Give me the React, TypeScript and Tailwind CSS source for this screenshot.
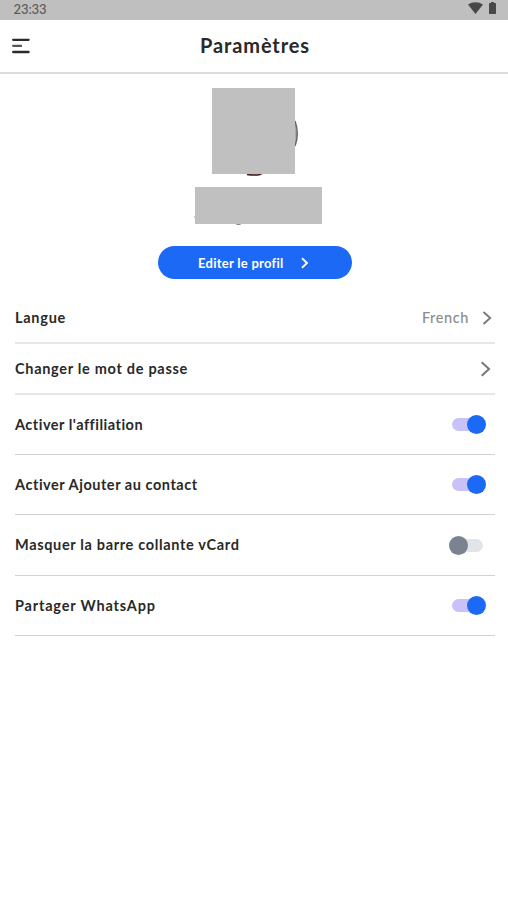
import React from "react";

function StatusBar() {
  return (
    <div className="flex h-[19.5px] items-start justify-between bg-[#bfbfbf] pr-[12px] pl-[13.5px]">
      <span className="text-[13px] leading-[18px] font-medium tracking-[-0.1px] text-[#5c5c5c]">23:33</span>
      <span className="flex items-start gap-[6px] pt-[2px]">
        <svg width="15" height="12" viewBox="0 0 15 12" fill="#484848">
          <path d="M0 2.6C4-.7 11-.7 15 2.6L7.5 12z" />
        </svg>
        <svg width="7" height="12" viewBox="0 0 7 12" fill="#484848">
          <path d="M2 0h3v1h1.3q.7 0 .7.7v9.6q0 .7-.7.7H.7q-.7 0-.7-.7V1.7q0-.7.7-.7H2z" />
        </svg>
      </span>
    </div>
  );
}

function Header() {
  return (
    <div className="flex h-[54.5px] items-center border-b-2 border-[#dcdcdc] pl-[12px]">
      <svg width="18" height="16" viewBox="0 0 18 16" fill="none" stroke="#2b2b2b" strokeWidth="2.3" strokeLinecap="round">
        <path d="M1.2 1.8H16.6M1.2 14H16.6" />
        <path d="M1.2 7.9H9" stroke="#555" />
      </svg>
      <h1 className="-mt-px flex-1 pr-[28px] text-center text-[20px] leading-[26px] font-bold tracking-[0.9px] text-[#292929]">Paramètres</h1>
    </div>
  );
}

function Profile() {
  return (
    <div className="flex flex-col items-center pt-[14px]">
      <div className="relative mr-[1px] h-[86px] w-[83px]">
        <svg className="absolute top-0 left-0" width="88" height="90" viewBox="0 0 88 90">
          <path d="M82 32Q88.500 46 82 60z" fill="#aaa" />
          <path d="M83 33Q87.500 46 83 58" fill="none" stroke="#666" strokeWidth="1.5" />
          <path d="M32 85Q43 89.500 55 85z" fill="#a3604f" />
          <path d="M35 86.500Q43 88 49 86.300" fill="none" stroke="#2b2020" strokeWidth="1.300" />
        </svg>
        <div className="relative h-full w-full bg-[#c0c0c0]" />
      </div>
      <div className="relative mt-[13px] ml-[9px] h-[36.5px] w-[127px]">
        <div className="absolute bottom-[-1px] left-[41px] h-[3px] w-[5px] rounded-full bg-[#888]" />
        <div className="absolute bottom-[6px] left-[-1px] h-[2px] w-[2px] bg-[#ccc]" />
        <div className="relative h-full w-full bg-[#c0c0c0]" />
      </div>
      <button className="mt-[22.5px] ml-[2px] flex h-[33px] w-[194px] items-center rounded-full bg-[#1c69f5] pl-[40px] text-white">
        <span className="w-[102px] text-left text-[13px] leading-[18px] font-bold tracking-[0.27px] whitespace-nowrap">Editer le profil</span>
        <svg width="9" height="12" viewBox="0 0 9 12" fill="none" stroke="white" strokeWidth="1.9">
          <path d="M2 1.2L7 6L2 10.8" />
        </svg>
      </button>
    </div>
  );
}

function Chevron({ large = false }: { large?: boolean }) {
  return (
    <svg width={large ? 11 : 10} height={large ? 16 : 14} viewBox="0 0 10 14" preserveAspectRatio="none" fill="none" stroke="#777" strokeWidth="1.8">
      <path d="M1.5 1L8.200 7L1.5 13" />
    </svg>
  );
}

function Toggle({ on }: { on: boolean }) {
  return (
    <span className="flex w-[38px] items-center">
      <span className={on ? "ml-[3px] flex h-[13px] w-[32px] items-center justify-end rounded-full bg-[#c9c2f8]" : "ml-[3px] flex h-[13px] w-[31px] items-center rounded-full bg-[#e1e4e8]"}>
        <span className={on ? "-mr-[2px] h-[19px] w-[19px] shrink-0 rounded-full bg-[#1c69f5]" : "-ml-[3px] h-[19px] w-[19px] shrink-0 rounded-full bg-[#7b8290]"} />
      </span>
    </span>
  );
}

const label = "text-[14.5px] leading-[20px] font-bold whitespace-nowrap text-[#292929] ";

export default function App() {
  return (
    <div className="h-[900px] w-[508px] overflow-hidden bg-white font-['Lato','Noto_Sans',sans-serif]">
      <StatusBar />
      <Header />
      <Profile />
      <div className="mt-[14px] flex flex-col pr-[13px] pl-[15px]">
        <div className="flex h-[51px] items-center justify-between border-b-2 border-[#e7e7e7] pr-[3px]">
          <span className={label + "tracking-[0.73px]"}>Langue</span>
          <span className="flex items-center gap-[13px] text-[14.5px] leading-[20px] font-medium tracking-[0.6px] text-[#8b8b8b]">
            French
            <Chevron />
          </span>
        </div>
        <div className="flex h-[51px] items-center justify-between border-b-2 border-[#e7e7e7] pr-[4px]">
          <span className={label + "tracking-[0.7px]"}>Changer le mot de passe</span>
          <Chevron large />
        </div>
        <div className="flex h-[60px] items-center justify-between border-b-[1.5px] border-[#d2d2d2] pr-[8px]">
          <span className={label + "tracking-[0.5px]"}>Activer l'affiliation</span>
          <Toggle on />
        </div>
        <div className="flex h-[60px] items-center justify-between border-b-[1.5px] border-[#d2d2d2] pr-[8px]">
          <span className={label + "tracking-[0.54px]"}>Activer Ajouter au contact</span>
          <Toggle on />
        </div>
        <div className="flex h-[61px] items-center justify-between border-b-[1.5px] border-[#d2d2d2] pr-[8px]">
          <span className={label + "tracking-[0.66px]"}>Masquer la barre collante vCard</span>
          <Toggle on={false} />
        </div>
        <div className="flex h-[60px] items-center justify-between border-b-[1.5px] border-[#d2d2d2] pr-[8px]">
          <span className={label + "tracking-[0.82px]"}>Partager WhatsApp</span>
          <Toggle on />
        </div>
      </div>
    </div>
  );
}
